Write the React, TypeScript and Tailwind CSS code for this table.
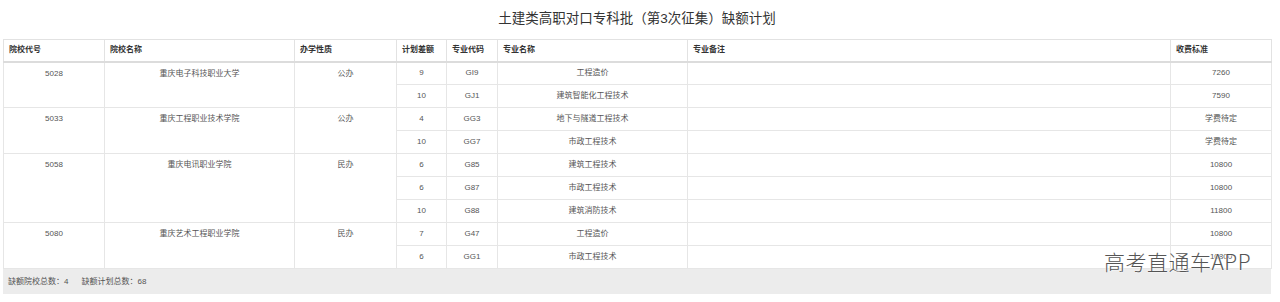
import React from 'react';

interface Major {
  gap: number;
  code: string;
  name: string;
  fee: string;
}

interface School {
  code: string;
  name: string;
  type: string;
  majors: Major[];
}

const schools: School[] = [
  {
    code: '5028',
    name: '重庆电子科技职业大学',
    type: '公办',
    majors: [
      { gap: 9, code: 'GI9', name: '工程造价', fee: '7260' },
      { gap: 10, code: 'GJ1', name: '建筑智能化工程技术', fee: '7590' },
    ],
  },
  {
    code: '5033',
    name: '重庆工程职业技术学院',
    type: '公办',
    majors: [
      { gap: 4, code: 'GG3', name: '地下与隧道工程技术', fee: '学费待定' },
      { gap: 10, code: 'GG7', name: '市政工程技术', fee: '学费待定' },
    ],
  },
  {
    code: '5058',
    name: '重庆电讯职业学院',
    type: '民办',
    majors: [
      { gap: 6, code: 'G85', name: '建筑工程技术', fee: '10800' },
      { gap: 6, code: 'G87', name: '市政工程技术', fee: '10800' },
      { gap: 10, code: 'G88', name: '建筑消防技术', fee: '11800' },
    ],
  },
  {
    code: '5080',
    name: '重庆艺术工程职业学院',
    type: '民办',
    majors: [
      { gap: 7, code: 'G47', name: '工程造价', fee: '10800' },
      { gap: 6, code: 'GG1', name: '市政工程技术', fee: '10800' },
    ],
  },
];

const th = 'h-[22px] px-[5px] text-left font-bold text-[#333] border border-[#e2e2e2] border-b-2 border-b-[#dcdcdc]';
const td = 'h-[23px] px-[5px] text-center border border-[#e6e6e6]';
const spanTd = 'px-[5px] pt-[6px] text-center align-top border border-[#e6e6e6]';

export default function App() {
  return (
    <div
      className="relative w-[1280px] h-[302px] bg-white overflow-hidden"
      style={{ fontFamily: '"Liberation Sans", "Noto Sans CJK SC", sans-serif' }}
    >
      <div className="ml-[3px] w-[1268px]">
        <div className="h-[39px] flex items-center justify-center text-[13.5px] text-[#333]">
          土建类高职对口专科批（第3次征集）缺额计划
        </div>
        <table className="w-[1268px] table-fixed border-collapse text-[8px] leading-[10px] text-[#555]">
          <colgroup>
            <col className="w-[101px]" />
            <col className="w-[190px]" />
            <col className="w-[102px]" />
            <col className="w-[50px]" />
            <col className="w-[51px]" />
            <col className="w-[190px]" />
            <col className="w-[483px]" />
            <col className="w-[101px]" />
          </colgroup>
          <thead>
            <tr>
              <th className={th}>院校代号</th>
              <th className={th}>院校名称</th>
              <th className={th}>办学性质</th>
              <th className={th}>计划差额</th>
              <th className={th}>专业代码</th>
              <th className={th}>专业名称</th>
              <th className={th}>专业备注</th>
              <th className={th}>收费标准</th>
            </tr>
          </thead>
          <tbody>
            {schools.map((s) =>
              s.majors.map((m, i) => (
                <tr key={s.code + m.code}>
                  {i === 0 && (
                    <>
                      <td rowSpan={s.majors.length} className={spanTd}>{s.code}</td>
                      <td rowSpan={s.majors.length} className={spanTd}>{s.name}</td>
                      <td rowSpan={s.majors.length} className={spanTd}>{s.type}</td>
                    </>
                  )}
                  <td className={td}>{m.gap}</td>
                  <td className={td}>{m.code}</td>
                  <td className={td}>{m.name}</td>
                  <td className={td}></td>
                  <td className={td}>{m.fee}</td>
                </tr>
              ))
            )}
          </tbody>
        </table>
        <div className="h-[25px] flex items-center gap-[13px] px-[5px] bg-[#ececec] text-[8px] text-[#555]">
          <span>缺额院校总数：4</span>
          <span>缺额计划总数：68</span>
        </div>
      </div>
      <div
        className="absolute left-[1104px] top-[247px] text-[21px] leading-[28px] font-light tracking-[0.5px] text-[#555] [text-shadow:0_0_2px_#fff,0_0_2px_#fff]"
        style={{ fontFamily: '"Noto Sans CJK SC", "Liberation Sans", sans-serif' }}
      >
        高考直通车APP
      </div>
    </div>
  );
}
